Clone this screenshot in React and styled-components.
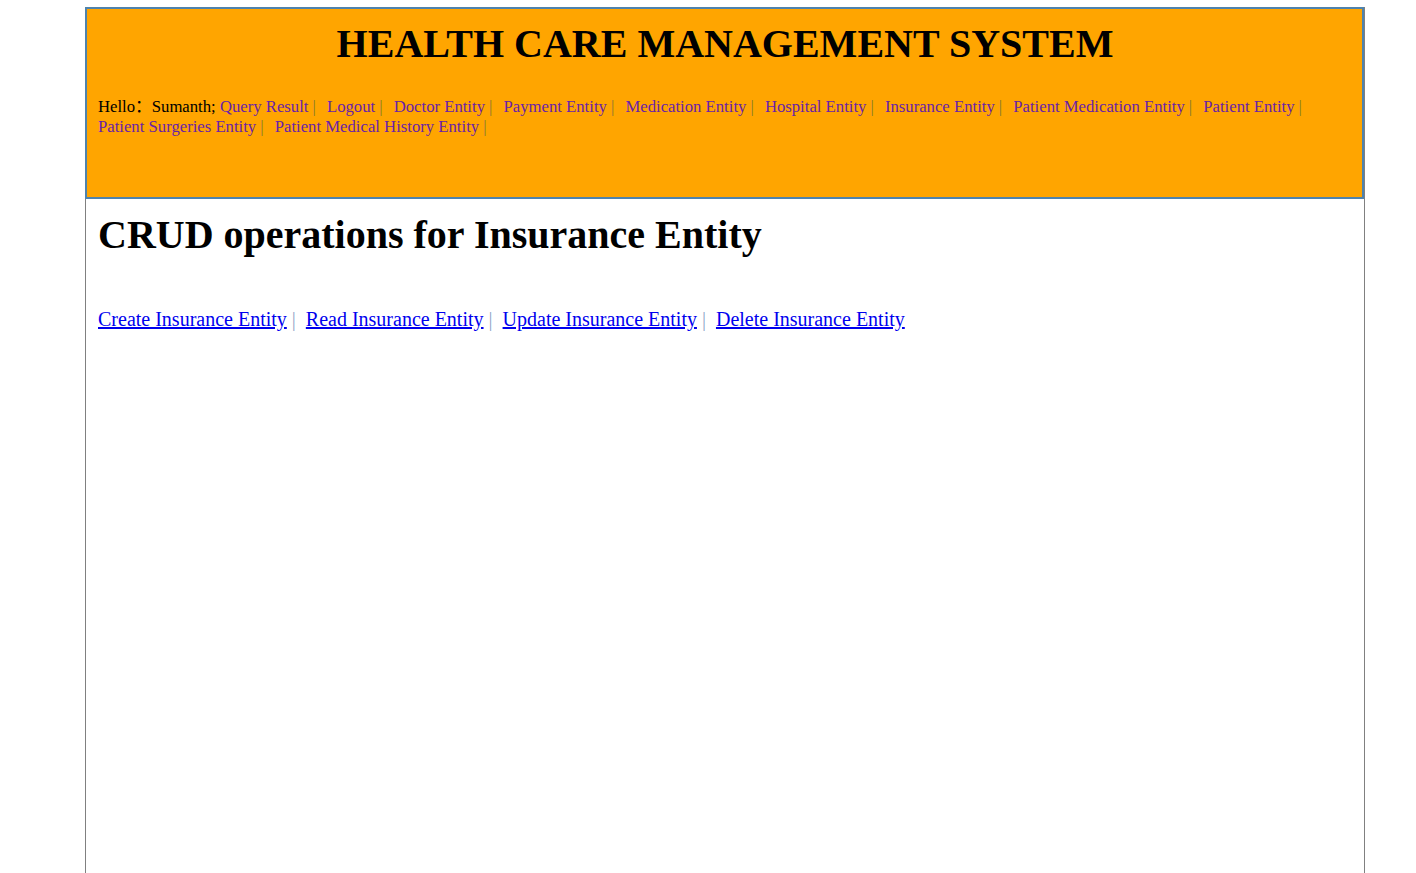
import styled, { createGlobalStyle } from 'styled-components';

const GlobalStyle = createGlobalStyle`
  html, body {
    margin: 0;
    padding: 0;
    background: #ffffff;
  }
  body {
    font-family: "Liberation Serif", "Times New Roman", "Noto Sans CJK SC", serif;
  }
`;

const navLinks = [
  'Query Result',
  'Logout',
  'Doctor Entity',
  'Payment Entity',
  'Medication Entity',
  'Hospital Entity',
  'Insurance Entity',
  'Patient Medication Entity',
  'Patient Entity',
  'Patient Surgeries Entity',
  'Patient Medical History Entity',
];

const crudLinks = [
  'Create Insurance Entity',
  'Read Insurance Entity',
  'Update Insurance Entity',
  'Delete Insurance Entity',
];

const Page = styled.div`
  box-sizing: border-box;
  width: 1280px;
  min-height: 866px;
  margin: 7px 0 0 85px;
  border-left: 1px solid #808080;
  border-right: 1px solid #808080;
`;

const Header = styled.header`
  box-sizing: border-box;
  height: 192px;
  margin-left: -1px;
  padding: 0 10px 0 11px;
  background: #ffa500;
  border: 2px solid #4f83ad;
`;

const Title = styled.h1`
  margin: 0;
  padding-top: 11px;
  text-align: center;
  font-size: 40px;
  line-height: 48px;
  font-weight: bold;
  color: #000000;
`;

const Nav = styled.nav`
  margin-top: 29px;
  font-size: 16.7px;
  line-height: 20px;
  color: #000000;
`;

const Greeting = styled.span`
  color: #000000;
`;

const NavItem = styled.span`
  white-space: nowrap;
  margin-right: 7px;
`;

const NavLink = styled.a`
  color: #6a1fa8;
  text-decoration: none;
`;

const Separator = styled.span`
  margin-left: ${(p) => p.$gap}px;
  color: ${(p) => p.$color};
`;

const Content = styled.main`
  padding: 0 12px;
`;

const Heading = styled.h2`
  margin: 12px 0 0;
  font-size: 40px;
  line-height: 48px;
  font-weight: bold;
  color: #000000;
`;

const CrudRow = styled.div`
  margin-top: 48px;
  font-size: 20px;
  line-height: 24px;
`;

const CrudLink = styled.a`
  color: #0000ee;
  text-decoration: underline;
`;

function App() {
  return (
    <>
      <GlobalStyle />
      <Page>
        <Header>
          <Title>HEALTH CARE MANAGEMENT SYSTEM</Title>
          <Nav>
            <Greeting>Hello：Sumanth;</Greeting>{' '}
            {navLinks.map((label) => (
              <span key={label}>
                <NavItem>
                  <NavLink href="#">{label}</NavLink>
                  <Separator $gap={4} $color="#857a35">|</Separator>
                </NavItem>{' '}
              </span>
            ))}
          </Nav>
        </Header>
        <Content>
          <Heading>CRUD operations for Insurance Entity</Heading>
          <CrudRow>
            {crudLinks.map((label, i) => (
              <span key={label}>
                <CrudLink href="#">{label}</CrudLink>
                {i < crudLinks.length - 1 && (
                  <>
                    <Separator $gap={5} $color="#8fa7c8">|</Separator>
                    {'\u00a0 '}
                  </>
                )}
              </span>
            ))}
          </CrudRow>
        </Content>
      </Page>
    </>
  );
}

export default App;
